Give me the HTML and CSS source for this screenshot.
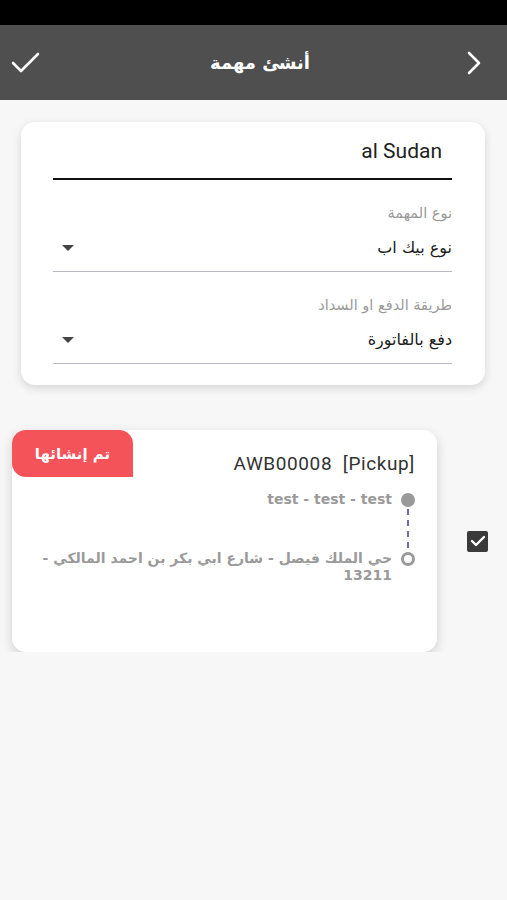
FILE: index.html
```html
<!DOCTYPE html>
<html lang="ar" dir="rtl">
<head>
    <meta charset="UTF-8">
    <meta name="viewport" content="width=device-width, initial-scale=1.0">
    <title>أنشئ مهمة</title>
    <link rel="stylesheet" href="styles.css">
</head>
<body>
    <div class="status-bar"></div>
    <header class="topbar">
        <button class="icon-btn">
            <svg width="18" height="26" viewBox="0 0 18 26"><path d="M4 3 L14 13 L4 23" fill="none" stroke="#fff" stroke-width="2.6" stroke-linecap="round" stroke-linejoin="round"/></svg>
        </button>
        <h1 class="title">أنشئ مهمة</h1>
        <button class="icon-btn">
            <svg width="30" height="24" viewBox="0 0 30 24"><path d="M2 12 L10 20 L27 3" fill="none" stroke="#fff" stroke-width="2.6" stroke-linecap="round" stroke-linejoin="round"/></svg>
        </button>
    </header>

    <main class="content">
        <section class="form-card">
            <div class="text-field">
                <div class="input-text">al Sudan</div>
            </div>
            <div class="field">
                <div class="field-label">نوع المهمة</div>
                <div class="select-row">
                    <span class="select-value">نوع بيك اب</span>
                    <span class="caret"></span>
                </div>
            </div>
            <div class="field">
                <div class="field-label">طريقة الدفع او السداد</div>
                <div class="select-row">
                    <span class="select-value">دفع بالفاتورة</span>
                    <span class="caret"></span>
                </div>
            </div>
        </section>

        <div class="task-row">
            <span class="checkbox">
                <svg width="16" height="14" viewBox="0 0 16 14"><path d="M2 7 L6 11 L14 3" fill="none" stroke="#fff" stroke-width="2.4" stroke-linecap="round" stroke-linejoin="round"/></svg>
            </span>
            <article class="task-card">
                <div class="task-head">
                    <div class="awb" dir="ltr">AWB00008&nbsp;&nbsp;[Pickup]</div>
                    <span class="badge">تم إنشائها</span>
                </div>
                <div class="timeline">
                    <div class="stop">
                        <span class="dot filled"></span>
                        <span class="stop-text">test - test - test</span>
                    </div>
                    <div class="connector"></div>
                    <div class="stop">
                        <span class="dot hollow"></span>
                        <span class="stop-text">حي الملك فيصل - شارع ابي بكر بن احمد المالكي -<br>13211</span>
                    </div>
                </div>
            </article>
        </div>
    </main>
</body>
</html>
```

FILE: styles.css
```css
* {
    box-sizing: border-box;
}
body {
    margin: 0;
    background-color: #f7f7f7;
    font-family: Roboto, "DejaVu Sans", sans-serif;
    color: #222;
}
.status-bar {
    height: 25px;
    background-color: #000;
}
.topbar {
    height: 75px;
    background-color: #4f4f4f;
    display: flex;
    align-items: center;
    justify-content: space-between;
    padding: 0 24px 0 11px;
}
.icon-btn {
    background: none;
    border: none;
    padding: 0;
    display: flex;
    align-items: center;
}
.title {
    margin: 0 0 0 14px;
    color: #fff;
    font-size: 18px;
    font-weight: bold;
    font-family: "DejaVu Sans", sans-serif;
}
.content {
    padding-top: 22px;
}
.form-card {
    background: #fff;
    margin: 0 22px 0 21px;
    border-radius: 14px;
    box-shadow: 0 3px 10px rgba(0, 0, 0, 0.14);
    padding: 14px 33px 21px 32px;
}
.text-field {
    border-bottom: 2px solid #111;
    padding: 1px 10px 13px 0;
}
.input-text {
    direction: ltr;
    text-align: right;
    font-size: 21px;
    line-height: 28px;
    color: #222;
}
.field {
    border-bottom: 1px solid #b9b9c6;
    margin-top: 23px;
    padding-bottom: 11px;
}
.field-label {
    font-family: "DejaVu Sans", sans-serif;
    font-size: 14.5px;
    line-height: 20px;
    color: #9a9a9a;
}
.select-row {
    margin-top: 13px;
    display: flex;
    align-items: center;
    justify-content: space-between;
    padding-left: 9px;
}
.select-value {
    font-family: "DejaVu Sans", sans-serif;
    font-size: 16px;
    line-height: 24px;
    color: #1b1b1b;
}
.caret {
    width: 0;
    height: 0;
    border-left: 6px solid transparent;
    border-right: 6px solid transparent;
    border-top: 6px solid #444;
}
.task-row {
    margin-top: 45px;
    display: flex;
    align-items: center;
    padding-right: 19px;
    gap: 30px;
}
.checkbox {
    width: 21px;
    height: 21px;
    border-radius: 2px;
    background-color: #3a3a3a;
    display: flex;
    align-items: center;
    justify-content: center;
}
.task-card {
    width: 425px;
    height: 222px;
    background: #fff;
    border-radius: 14px;
    box-shadow: 0 4px 12px rgba(0, 0, 0, 0.16);
}
.task-head {
    display: flex;
    justify-content: space-between;
    align-items: flex-start;
}
.awb {
    font-size: 19px;
    letter-spacing: 0.6px;
    color: #333;
    padding: 22px 22px 0 0;
}
.badge {
    background-color: #f4535a;
    color: #fff;
    font-family: "DejaVu Sans", sans-serif;
    font-size: 15px;
    font-weight: bold;
    width: 121px;
    height: 47px;
    display: flex;
    align-items: center;
    justify-content: center;
    border-radius: 14px 14px 0 14px;
}
.timeline {
    margin-top: 14px;
    padding-right: 22px;
}
.stop {
    display: flex;
    align-items: flex-start;
    gap: 9px;
}
.dot {
    flex: none;
    width: 14px;
    height: 14px;
    border-radius: 50%;
    margin-top: 2px;
}
.dot.filled {
    background-color: #9a9a9a;
}
.dot.hollow {
    border: 3px solid #9a9a9a;
}
.stop-text {
    font-family: "DejaVu Sans", sans-serif;
    font-size: 14px;
    line-height: 17px;
    font-weight: bold;
    color: #9a9a9a;
    width: 360px;
}
.connector {
    height: 39px;
    margin: 1px 6px 2px 0;
    width: 0;
    border-right: 2px dashed #6f6aa8;
}
```
